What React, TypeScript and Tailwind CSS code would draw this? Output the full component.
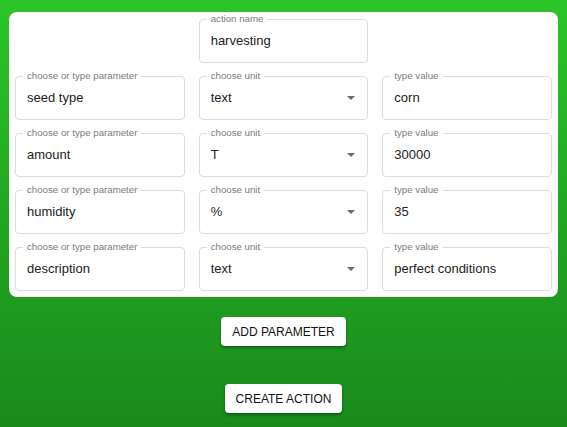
const rows = [
  { param: "seed type", unit: "text", value: "corn" },
  { param: "amount", unit: "T", value: "30000" },
  { param: "humidity", unit: "%", value: "35" },
  { param: "description", unit: "text", value: "perfect conditions" },
];

function Field({ label, value, select }: { label: string; value: string; select?: boolean }) {
  return (
    <div className="relative h-[44px] w-full rounded-[4px] border border-[#dcdcdc] bg-white flex items-center pl-[11px] pr-[10px]">
      <span className="absolute -top-[7px] left-[7px] bg-white px-[4px] text-[9.7px] leading-[12px] text-[#7a7a7a]">
        {label}
      </span>
      <span className="flex-1 text-[13px] text-[#222]">{value}</span>
      {select && (
        <svg width="8" height="4" viewBox="0 0 8 4" className="mr-[2px]">
          <path d="M0 0 L8 0 L4 4 Z" fill="#6b6b6b" />
        </svg>
      )}
    </div>
  );
}

export default function App() {
  return (
    <div
      className="min-h-[427px] w-full bg-gradient-to-b from-[#2bc529] to-[#1a8a1c] pt-[12px] px-[9px] pb-[14px] flex flex-col items-center"
      style={{ fontFamily: "'Liberation Sans', Arial, sans-serif" }}
    >
      <section className="w-full rounded-[8px] bg-white px-[6px] pt-[7px] pb-[6px] grid grid-cols-3 gap-x-[14px] gap-y-[13px]">
        <div />
        <Field label="action name" value="harvesting" />
        <div />
        {rows.map((r) => (
          <>
            <Field label="choose or type parameter" value={r.param} />
            <Field label="choose unit" value={r.unit} select />
            <Field label="type value" value={r.value} />
          </>
        ))}
      </section>
      <button className="mt-[20px] h-[29px] px-[11px] rounded-[4px] bg-white text-[12px] text-[#111] shadow-[0_2px_3px_rgba(0,0,0,0.35)]">
        ADD PARAMETER
      </button>
      <button className="mt-[38px] h-[29px] px-[11px] rounded-[4px] bg-white text-[12px] text-[#111] shadow-[0_2px_3px_rgba(0,0,0,0.35)]">
        CREATE ACTION
      </button>
    </div>
  );
}
